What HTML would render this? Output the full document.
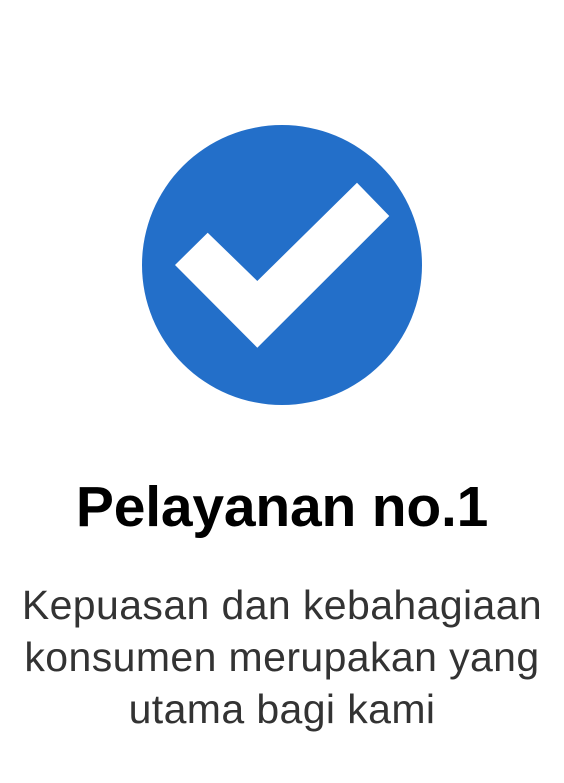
<!DOCTYPE html>
<html><head><meta charset="utf-8"><style>
html,body{margin:0;padding:0;background:#fff;width:564px;height:783px;overflow:hidden}
svg{position:absolute;left:0;top:0}
.t{position:absolute;left:0;width:564px;text-align:center;font-family:"Liberation Sans",sans-serif;white-space:nowrap}
.h{top:474px;font-size:57px;font-weight:bold;color:#000;line-height:66px;letter-spacing:-0.2px}
.p{top:579px;font-size:41px;color:#333;line-height:52px;letter-spacing:0.4px}
</style></head><body>
<svg width="564" height="420" viewBox="0 0 564 420">
<circle cx="282" cy="265" r="140" fill="#236fc9"/>
<polygon points="175,265 207.7,232.7 257.3,281 357,182.7 389.3,216 257.3,347.7" fill="#fff"/>
</svg>
<div class="t h">Pelayanan no.1</div>
<div class="t p">Kepuasan dan kebahagiaan<br>konsumen merupakan yang<br>utama bagi kami</div>
</body></html>
